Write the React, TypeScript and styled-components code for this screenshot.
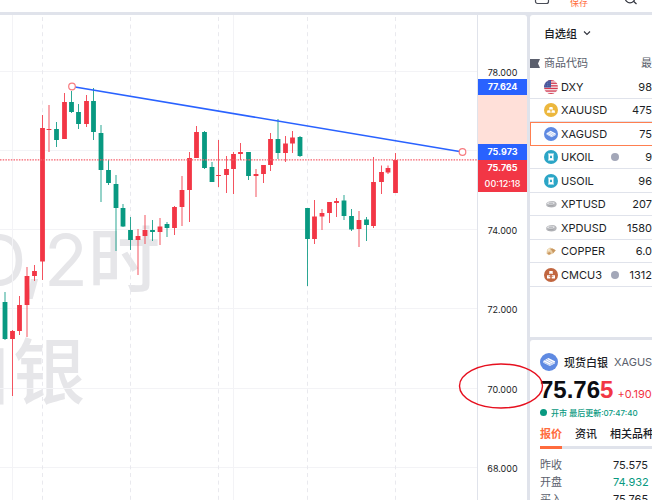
import React from "react";
import styled, { createGlobalStyle } from "styled-components";

const sans = `Inter, "Noto Sans CJK SC", sans-serif`;

const GlobalStyle = createGlobalStyle`
  * { box-sizing: border-box; }
  body { margin: 0; background: #e0e3eb; overflow: hidden; font-family: ${sans}; color: #1c1e26; }
  button { font: inherit; color: inherit; border: 0; padding: 0; background: none; cursor: pointer; }
`;

const Page = styled.div`
  position: relative;
  display: flex;
  flex-direction: column;
  height: 100vh;
`;
const Toolbar = styled.header`
  flex: none;
  display: flex;
  justify-content: flex-end;
  align-items: flex-end;
  height: 12px;
  padding-right: 14px;
  background: #fff;
  overflow: hidden;
`;
const ToolButton = styled.button<{ $gap: number }>`
  display: flex;
  flex: none;
  margin-right: ${(p) => p.$gap}px;
`;
const SaveButton = styled(ToolButton)`
  color: #ff6b3d;
  font-size: 9px;
  line-height: 12px;
  padding-bottom: 3px;
`;
const Workspace = styled.main`
  flex: 1;
  min-height: 0;
  display: flex;
  gap: 3px;
  padding-top: 3px;
`;
const ChartPanel = styled.section`
  flex: 1;
  min-width: 0;
  display: flex;
  background: #fff;
  border-top-right-radius: 3px;
  overflow: hidden;
`;
const Plot = styled.svg`
  display: block;
  flex: 1;
  min-width: 0;
  height: 100%;
`;
const Axis = styled.svg`
  display: block;
  flex: none;
  width: 50px;
  height: 100%;
  border-left: 1px solid #e0e3eb;
  font-family: ${sans};
`;
const Sidebar = styled.aside`
  flex: none;
  width: 122px;
  display: flex;
  flex-direction: column;
  gap: 3px;
`;
const Card = styled.section`
  background: #fff;
  border-radius: 3px 0 0 0;
  overflow: hidden;
`;
const WatchCard = styled(Card)`
  flex: none;
  padding-bottom: 50px;
`;
const QuoteCard = styled(Card)`
  flex: 1;
  min-height: 0;
  padding: 12px 0 0 10px;
`;
const GroupButton = styled.button`
  display: flex;
  align-items: center;
  gap: 6px;
  height: 36px;
  padding-left: 14px;
  font-size: 11px;
  font-weight: 500;
`;
const WatchTable = styled.table`
  width: 100%;
  table-layout: fixed;
  border-collapse: separate;
  border-spacing: 0;
  font-size: 11px;
  line-height: 14px;
  white-space: nowrap;
`;
const WatchHead = styled.th<{ $right?: boolean }>`
  height: 24px;
  padding: 0;
  width: ${(p) => (p.$right ? 32 : 90)}px;
  font-weight: 400;
  color: #5b5f6d;
  text-align: ${(p) => (p.$right ? "right" : "left")};
`;
const HeadLabel = styled.span`
  display: flex;
  align-items: center;
  gap: 4px;
`;
const WatchRow = styled.tr<{ $short?: boolean; $selected?: boolean }>`
  height: ${(p) => (p.$short ? 23 : 24)}px;
  td {
    padding: 0;
    border-bottom: 1px solid #e0e3eb;
  }
  ${(p) =>
    p.$selected &&
    `
    td { border: 1px solid #ff7f50; border-width: 1px 0; }
    td:first-child { border-left-width: 1px; }
  `}
`;
const SymbolCell = styled.span<{ $inset: number }>`
  display: flex;
  align-items: center;
  gap: 3px;
  padding-left: ${(p) => p.$inset}px;
`;
const StatusDot = styled.i`
  flex: none;
  width: 8px;
  height: 8px;
  margin: 0 1px 0 auto;
  border-radius: 50%;
  background: #a3a7b8;
`;
const PriceCell = styled.td`
  text-align: right;
`;
const IconSvg = styled.svg`
  flex: none;
`;
const Title = styled.h2`
  display: flex;
  align-items: center;
  height: 20px;
  margin: 0;
  font-size: 11px;
  font-weight: 500;
  white-space: nowrap;
`;
const TitleName = styled.span`
  margin: 0 6px;
`;
const TitleCode = styled.span`
  font-weight: 400;
  color: #5b5f6d;
`;
const PriceLine = styled.div`
  display: flex;
  align-items: baseline;
  gap: 4px;
  height: 33px;
  line-height: 36px;
  white-space: nowrap;
`;
const Price = styled.strong`
  font-family: "Liberation Sans", sans-serif;
  font-size: 24px;
  font-weight: 700;
  color: #0c0d12;
`;
const Tick = styled.span`
  color: #f23645;
`;
const Change = styled.span`
  font-size: 11px;
  color: #f23645;
`;
const Status = styled.p`
  display: flex;
  align-items: center;
  gap: 4px;
  height: 14px;
  margin: 0;
  color: #089981;
  font-size: 8px;
  font-weight: 500;
  white-space: nowrap;
`;
const LiveDot = styled.i`
  width: 7px;
  height: 7px;
  border-radius: 50%;
  background: #089981;
`;
const Tabs = styled.nav`
  display: flex;
  gap: 13px;
  height: 30px;
  border-bottom: 3px solid #e0e3eb;
`;
const Tab = styled.button<{ $active?: boolean }>`
  flex: none;
  height: 30px;
  font-size: 11px;
  font-weight: ${(p) => (p.$active ? 700 : 500)};
  color: ${(p) => (p.$active ? "#ff6b3d" : "#1c1e26")};
  border-bottom: 3px solid ${(p) => (p.$active ? "#ff6b3d" : "transparent")};
  white-space: nowrap;
`;
const Facts = styled.dl`
  display: grid;
  grid-template-columns: 73px 1fr;
  grid-auto-rows: 17px;
  margin: 8px 0 0;
  font-size: 11px;
  line-height: 17px;
`;
const FactLabel = styled.dt`
  color: #5b5f6d;
`;
const FactValue = styled.dd<{ $down?: boolean }>`
  margin: 0;
  color: ${(p) => (p.$down ? "#089981" : "#1c1e26")};
`;
const Marker = styled.svg`
  position: absolute;
  right: 108px;
  top: 362px;
  width: 86px;
  height: 48px;
  pointer-events: none;
`;

const UP = "#f23645";
const DOWN = "#089981";

// [centre x, high, body top, body bottom, low, rising]
type Candle = [number, number, number, number, number, 0 | 1];
const candles: Candle[] = [
  [5, 292, 302, 339, 340, 0],
  [12.5, 330, 331, 339, 396, 1],
  [19.5, 296, 305, 331, 335, 1],
  [27, 267, 276, 305, 337, 1],
  [34.5, 265, 271, 276, 281, 1],
  [42.5, 115, 128, 261.5, 280, 1],
  [49, 105, 129, 130, 152, 1],
  [56.5, 122, 129, 140, 147, 0],
  [64.5, 93, 102, 139, 139, 1],
  [71.5, 91, 102, 112, 113, 0],
  [78.5, 104, 112, 124, 129, 0],
  [86.5, 95, 101, 124, 127, 1],
  [93.5, 88, 101, 132, 140, 0],
  [101, 125, 133, 170, 202, 0],
  [108.5, 160, 170, 183, 185, 0],
  [116, 175, 184, 208, 251, 0],
  [123, 204, 208, 226.5, 227, 0],
  [130.5, 217, 230, 240, 250, 0],
  [138, 229, 236, 240, 275, 1],
  [145, 215, 230, 236, 244, 1],
  [152.5, 220, 230, 232, 241, 0],
  [160, 218, 226.5, 232, 245, 1],
  [167, 222, 224, 228, 237, 0],
  [174.5, 206, 207, 228, 235, 1],
  [182, 176, 190, 207, 226, 1],
  [189.5, 152, 158, 190, 222, 1],
  [196.5, 126, 132, 158, 158, 1],
  [204.5, 131, 132, 168, 169, 0],
  [212, 162, 167, 182, 182, 0],
  [218.5, 140, 175, 176, 187, 1],
  [226.5, 156, 169, 175, 193, 1],
  [233.5, 152, 154, 169, 194, 1],
  [240.5, 143, 152, 154, 160, 1],
  [248.5, 152, 152, 176, 180, 0],
  [256, 169, 174, 176, 197, 1],
  [263.5, 165, 165, 174, 183, 1],
  [270.5, 133, 139, 165, 171, 1],
  [278, 119, 139, 153, 159, 0],
  [285.5, 136, 143.5, 153, 162, 1],
  [292.5, 131, 137.5, 143.5, 153, 1],
  [300, 136, 137, 156, 157, 0],
  [307.5, 208, 208, 239, 286, 0],
  [314.5, 200, 216.5, 239, 244, 1],
  [322, 209, 213, 216.5, 230, 1],
  [329.5, 202, 202, 213, 223, 1],
  [336.5, 198, 201, 203, 217, 1],
  [344, 195, 200.5, 216, 220, 0],
  [351.5, 209, 216, 229.5, 231, 0],
  [359, 211, 220, 229, 247, 1],
  [366.5, 217, 219.5, 225, 241, 0],
  [373.5, 157, 182, 226, 228, 1],
  [381.5, 165.5, 172, 182, 194, 1],
  [388, 165.5, 168, 172.5, 174, 1],
  [395.5, 153, 160, 193, 193, 1],
];

const gridY = [71.5, 150.5, 229.5, 308.5, 388.5, 467.5];
const sessionX = [42.5, 130.5, 218.5, 307.5, 395.5];
const TOP = 15;

function PriceChart() {
  return (
    <Plot role="img" aria-label="XAGUSD, 2时 现货白银">
      <g transform={`translate(0 ${-TOP})`}>
        <g fill="#e6e6e9" fontFamily={sans} fontSize="72" fontWeight="500" textAnchor="end">
          <text x="160" y="286"><tspan fontWeight="400">XAGUSD,2</tspan>时</text>
          <text x="85" y="398">现货白银</text>
        </g>
        {gridY.map((y) => (
          <line key={y} x1="0" x2="100%" y1={y} y2={y} stroke="#f3f3f6" />
        ))}
        {[12.5, 233.5].map((x) => (
          <line key={x} x1={x} x2={x} y1={TOP} y2="2000" stroke="#f3f3f6" />
        ))}
        {sessionX.map((x) => (
          <line key={x} x1={x} x2={x} y1="17" y2="2000" stroke="#e9e9ee" strokeDasharray="4 3.6" />
        ))}
        {candles.map(([x, high, top, bottom, low, up]) => (
          <g key={x} fill={up ? UP : DOWN}>
            <rect x={x - 0.5} y={high} width="1" height={low - high} opacity="0.85" />
            <rect x={x - 2.4} y={top} width="4.8" height={bottom - top} />
          </g>
        ))}
        <line x1="0" x2="100%" y1="159.8" y2="159.8" stroke="#f5606c" strokeWidth="1.2" strokeDasharray="1.5 1.2" />
        <line x1="72" y1="86.5" x2="462.5" y2="152" stroke="#2962ff" strokeWidth="1.6" />
        <g fill="#fff" stroke="#f77c80" strokeWidth="1.2">
          <circle cx="72" cy="86.5" r="3.3" />
          <circle cx="462.5" cy="152" r="3.3" />
        </g>
      </g>
    </Plot>
  );
}

function PriceAxis() {
  const labels = ["78.000", "", "74.000", "72.000", "70.000", "68.000"];
  const tags = [
    { y: 79, h: 16, fill: "#2962ff", text: "77.624" },
    { y: 144, h: 16, fill: "#2962ff", text: "75.973" },
    { y: 160, h: 17, fill: UP, text: "75.765" },
    { y: 176, h: 16, fill: UP, text: "00:12:18" },
  ];
  return (
    <Axis fontSize="9" textAnchor="middle">
      <g transform={`translate(0 ${-TOP})`}>
        <rect x="0" y="95" width="50" height="49" fill="#ffe0d9" />
        {labels.map((t, i) => (
          <text key={i} x="24.5" y={gridY[i] + 4} fill="#1c1e26">{t}</text>
        ))}
        {tags.map((t, i) => (
          <g key={t.text}>
            <rect x="0" y={t.y} width="50" height={t.h} fill={t.fill} />
            <text x="24.5" y={t.y + 11} fill="#fff" fontWeight={i === 3 ? 500 : 700}>{t.text}</text>
          </g>
        ))}
      </g>
    </Axis>
  );
}

type IconKind = "us" | "gold" | "silver" | "oil" | "metal" | "copper" | "cmcu";

function InstrumentIcon({ kind, size = 14 }: { kind: IconKind; size?: number }) {
  return (
    <IconSvg width={size} height={size} viewBox="0 0 14 14" aria-hidden="true">
      {kind === "us" && (
        <>
          <clipPath id="flagClip"><circle cx="7" cy="7" r="7" /></clipPath>
          <g clipPath="url(#flagClip)">
            <rect width="14" height="14" fill="#f3e9ee" />
            {[0, 2.6, 5.2, 7.8, 10.4, 13].map((y) => (
              <rect key={y} y={y} width="14" height="1.3" fill="#d53a50" />
            ))}
            <rect width="7" height="7.5" fill="#41529a" />
            {[1.8, 3.8, 5.8].map((y) => (
              <path key={y} d={`M1.5 ${y}h5`} stroke="#aab3d8" strokeWidth=".6" strokeDasharray=".7 .9" />
            ))}
          </g>
        </>
      )}
      {kind === "gold" && (
        <>
          <circle cx="7" cy="7" r="7" fill="#ecb73d" />
          <path d="M5.6 4h2.8l.7 2.5H4.900zM3.500 7.200h2.700L6.700 9.800H2.800zM7.800 7.200h2.700l.7 2.600H7.300z" fill="#fff" />
        </>
      )}
      {kind === "silver" && (
        <>
          <circle cx="7" cy="7" r="7" fill="#5f8ae2" />
          <path d="M2.5 6.2 6.500 3.800l5.200 2.700v1.400L7.700 10.200 2.600 7.600z" fill="#fff" />
          <path d="m3.800 5.500 5.200 2.800M5.200 4.700l5.100 2.700M2.700 6.900l5 2.500 3.900-2.200" fill="none" stroke="#8fabe8" strokeWidth=".5" />
        </>
      )}
      {kind === "oil" && (
        <>
          <circle cx="7" cy="7" r="7" fill="#2ba5c6" />
          <path d="M4 3.500h6v.8h-.5v5.400h.5v.8H4v-.8h.5V4.300H4z" fill="#fff" />
          <path d="M7 5.300c.8.9 1.100 1.400 1.100 1.900a1.100 1.100 0 0 1-2.200 0c0-.5.3-1 1.100-1.900z" fill="#2ba5c6" />
        </>
      )}
      {kind === "metal" && (
        <>
          <path d="M2.200 6.600C3.500 4 9 3.200 11.800 5.200c1.500 1.300 1 3.500-.7 4.500-2.700 1.300-7.300.9-8.700-.9z" fill="#b5b6ba" />
          <path d="M2.600 6.500C4 4.300 9.200 4 11 5.900c-1.300 1.900-6.200 2.300-8.400.6z" fill="#dedfe2" />
          <path d="M5 6.200h4M4.500 8.800h5" stroke="#8f9096" strokeWidth=".6" />
        </>
      )}
      {kind === "copper" && (
        <>
          <path d="m3 5.500 3-2 2.500 1 3.200 1.700-2.500 3.200-4.500 1.800L2.500 9.500z" fill="#e8cda4" />
          <path d="m6 5 2.500-.5 3.200 1.700-2.700 3-1-2.500zM3 9l3-1 1 1.800-2 1z" fill="#c99760" />
          <path d="m3.300 5.600 2.500-1.400.7 2-2.500 1z" fill="#f5e5c8" />
        </>
      )}
      {kind === "cmcu" && (
        <>
          <circle cx="7" cy="7" r="7" fill="#c16640" />
          <path d="M5.300 3h3.400v3H5.300zM3 7.200h3.300v3.200H3zM7.700 7.200H11v3.200H7.700z" fill="#fff" />
          <path d="M7 5v3M4.600 8.500h4.800" stroke="#c16640" strokeWidth=".6" />
        </>
      )}
    </IconSvg>
  );
}

interface Instrument {
  symbol: string;
  price: string;
  icon: IconKind;
  dot?: boolean;
  selected?: boolean;
}
const instruments: Instrument[] = [
  { symbol: "DXY", price: "98", icon: "us" },
  { symbol: "XAUUSD", price: "475", icon: "gold" },
  { symbol: "XAGUSD", price: "75", icon: "silver", selected: true },
  { symbol: "UKOIL", price: "9", icon: "oil", dot: true },
  { symbol: "USOIL", price: "96", icon: "oil" },
  { symbol: "XPTUSD", price: "207", icon: "metal" },
  { symbol: "XPDUSD", price: "1580", icon: "metal" },
  { symbol: "COPPER", price: "6.0", icon: "copper" },
  { symbol: "CMCU3", price: "1312", icon: "cmcu", dot: true },
];

function Watchlist() {
  return (
    <WatchCard>
      <GroupButton>
        自选组
        <svg width="8" height="6" viewBox="0 0 8 6" fill="none" stroke="#30333d" strokeWidth="1.1">
          <path d="m1 1.500 3 3 3-3" />
        </svg>
      </GroupButton>
      <WatchTable>
        <thead>
          <tr>
            <WatchHead>
              <HeadLabel>
                <svg width="10" height="9" viewBox="0 0 10 9" aria-hidden="true">
                  <path d="M0 0h10L8 4.500 10 9H0z" fill="#5b5f6d" />
                </svg>
                商品代码
              </HeadLabel>
            </WatchHead>
            <WatchHead $right>最</WatchHead>
          </tr>
        </thead>
        <tbody>
          {instruments.map((it, i) => (
            <WatchRow key={it.symbol} $short={i % 2 === 1} $selected={it.selected}>
              <td>
                <SymbolCell $inset={it.selected ? 13 : 14}>
                  <InstrumentIcon kind={it.icon} />
                  {it.symbol}
                  {it.dot && <StatusDot />}
                </SymbolCell>
              </td>
              <PriceCell>{it.price}</PriceCell>
            </WatchRow>
          ))}
        </tbody>
      </WatchTable>
    </WatchCard>
  );
}

function Quote() {
  return (
    <QuoteCard>
      <Title>
        <InstrumentIcon kind="silver" size={18} />
        <TitleName>现货白银</TitleName>
        <TitleCode>XAGUS</TitleCode>
      </Title>
      <PriceLine>
        <Price>75.76<Tick>5</Tick></Price>
        <Change>+0.190</Change>
      </PriceLine>
      <Status>
        <LiveDot />
        开市 最后更新:07:47:40
      </Status>
      <Tabs>
        <Tab $active>报价</Tab>
        <Tab>资讯</Tab>
        <Tab>相关品种</Tab>
      </Tabs>
      <Facts>
        <FactLabel>昨收</FactLabel>
        <FactValue>75.575</FactValue>
        <FactLabel>开盘</FactLabel>
        <FactValue $down>74.932</FactValue>
        <FactLabel>买入</FactLabel>
        <FactValue>75.765</FactValue>
      </Facts>
    </QuoteCard>
  );
}

export default function App() {
  return (
    <>
      <GlobalStyle />
      <Page>
        <Toolbar>
          <ToolButton $gap={20} aria-label="布局">
            <svg width="16" height="12" viewBox="0 0 16 12" fill="none" stroke="#4a4d57" strokeWidth="1.200">
              <path d="M1.500-6V1.500a2 2 0 0 0 2 2h9a2 2 0 0 0 2-2V-6" />
            </svg>
          </ToolButton>
          <SaveButton $gap={36}>保存</SaveButton>
          <ToolButton $gap={0} aria-label="搜索">
            <svg width="14" height="12" viewBox="0 0 14 12" fill="none" stroke="#30333d" strokeWidth="1.200">
              <circle cx="6" cy="-2" r="4.800" />
              <path d="m9.500 1.300 3 2.700" />
            </svg>
          </ToolButton>
        </Toolbar>
        <Workspace>
          <ChartPanel>
            <PriceChart />
            <PriceAxis />
          </ChartPanel>
          <Sidebar>
            <Watchlist />
            <Quote />
          </Sidebar>
        </Workspace>
        <Marker viewBox="0 0 86 48" aria-hidden="true">
          <ellipse cx="43" cy="24" rx="41.500" ry="22" fill="none" stroke="#e60f1e" strokeWidth="1.400" />
        </Marker>
      </Page>
    </>
  );
}
